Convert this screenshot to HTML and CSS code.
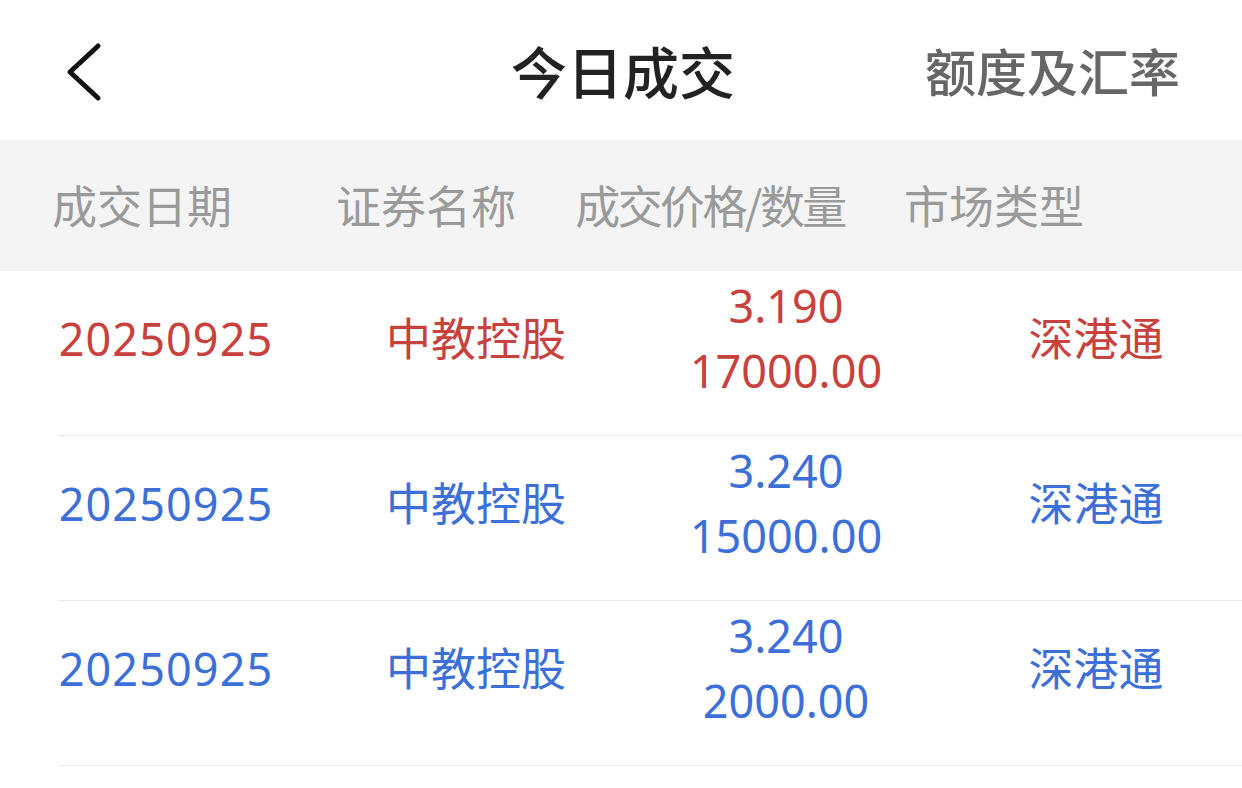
FILE: index.html
```html
<!DOCTYPE html>
<html lang="zh-CN">
<head>
<meta charset="utf-8">
<title>今日成交</title>
<link rel="stylesheet" href="styles.css">
</head>
<body>
<div class="page">
  <header class="nav">
    <div class="nav-left">
      <svg class="back" width="40" height="60" viewBox="0 0 40 60" aria-hidden="true">
        <polyline points="32,4 4,30 32,56" fill="none" stroke="#111" stroke-width="5" stroke-linecap="round" stroke-linejoin="round"/>
      </svg>
    </div>
    <h1 class="nav-title">今日成交</h1>
    <div class="nav-right">额度及汇率</div>
  </header>

  <div class="thead">
    <div class="th">成交日期</div>
    <div class="th">证券名称</div>
    <div class="th narrow">成交价格/数量</div>
    <div class="th">市场类型</div>
  </div>

  <div class="tbody">
    <div class="row buy">
      <div class="cells">
        <div class="cell date">20250925</div>
        <div class="cell">中教控股</div>
        <div class="cell stack"><span>3.190</span><span>17000.00</span></div>
        <div class="cell">深港通</div>
      </div>
    </div>
    <div class="row sell">
      <div class="cells">
        <div class="cell date">20250925</div>
        <div class="cell">中教控股</div>
        <div class="cell stack"><span>3.240</span><span>15000.00</span></div>
        <div class="cell">深港通</div>
      </div>
    </div>
    <div class="row sell">
      <div class="cells">
        <div class="cell date">20250925</div>
        <div class="cell">中教控股</div>
        <div class="cell stack"><span>3.240</span><span>2000.00</span></div>
        <div class="cell">深港通</div>
      </div>
    </div>
  </div>
</div>
</body>
</html>
```

FILE: styles.css
```css
* { box-sizing: border-box; }

html, body {
  margin: 0;
  padding: 0;
  background: #ffffff;
}

body {
  width: 1242px;
  height: 788px;
  overflow: hidden;
  font-family: "Noto Sans", "Noto Sans CJK SC", sans-serif;
}

.page {
  width: 1242px;
}

.nav {
  height: 140px;
  display: grid;
  grid-template-columns: 1fr auto 1fr;
  align-items: center;
  padding: 0 62px 0 66px;
  background: #fff;
}

.nav-left {
  display: flex;
  align-items: center;
  padding-top: 4px;
}

.back {
  display: block;
}

.nav-title {
  margin: 0;
  font-family: "Noto Sans CJK SC", sans-serif;
  font-size: 56px;
  font-weight: 500;
  color: #222;
  line-height: 1;
}

.nav-right {
  justify-self: end;
  font-family: "Noto Sans CJK SC", sans-serif;
  font-size: 51px;
  font-weight: 500;
  color: #666;
  line-height: 1;
}

.thead {
  height: 131px;
  background: #f4f4f4;
  display: grid;
  grid-template-columns: repeat(4, 284px);
  align-items: center;
}

.th {
  text-align: center;
  font-family: "Noto Sans CJK SC", sans-serif;
  font-size: 45px;
  color: #9a9a9a;
  line-height: 1;
  padding-bottom: 2px;
  white-space: nowrap;
}

.th.narrow {
  letter-spacing: -2.6px;
}

.row {
  margin-left: 59px;
  border-bottom: 1px solid #e9e9e9;
  padding: 2px 0 32px;
}

.cells {
  margin-left: -48px;
  display: grid;
  grid-template-columns: repeat(4, 310px);
  align-items: center;
  font-size: 45px;
  line-height: 65px;
}

.cell {
  text-align: center;
  white-space: nowrap;
}

.cell.date {
  letter-spacing: 1.1px;
}

.stack {
  display: flex;
  flex-direction: column;
  align-items: center;
}

.buy .cells { color: #c8413d; }
.sell .cells { color: #3d6fd8; }
```
